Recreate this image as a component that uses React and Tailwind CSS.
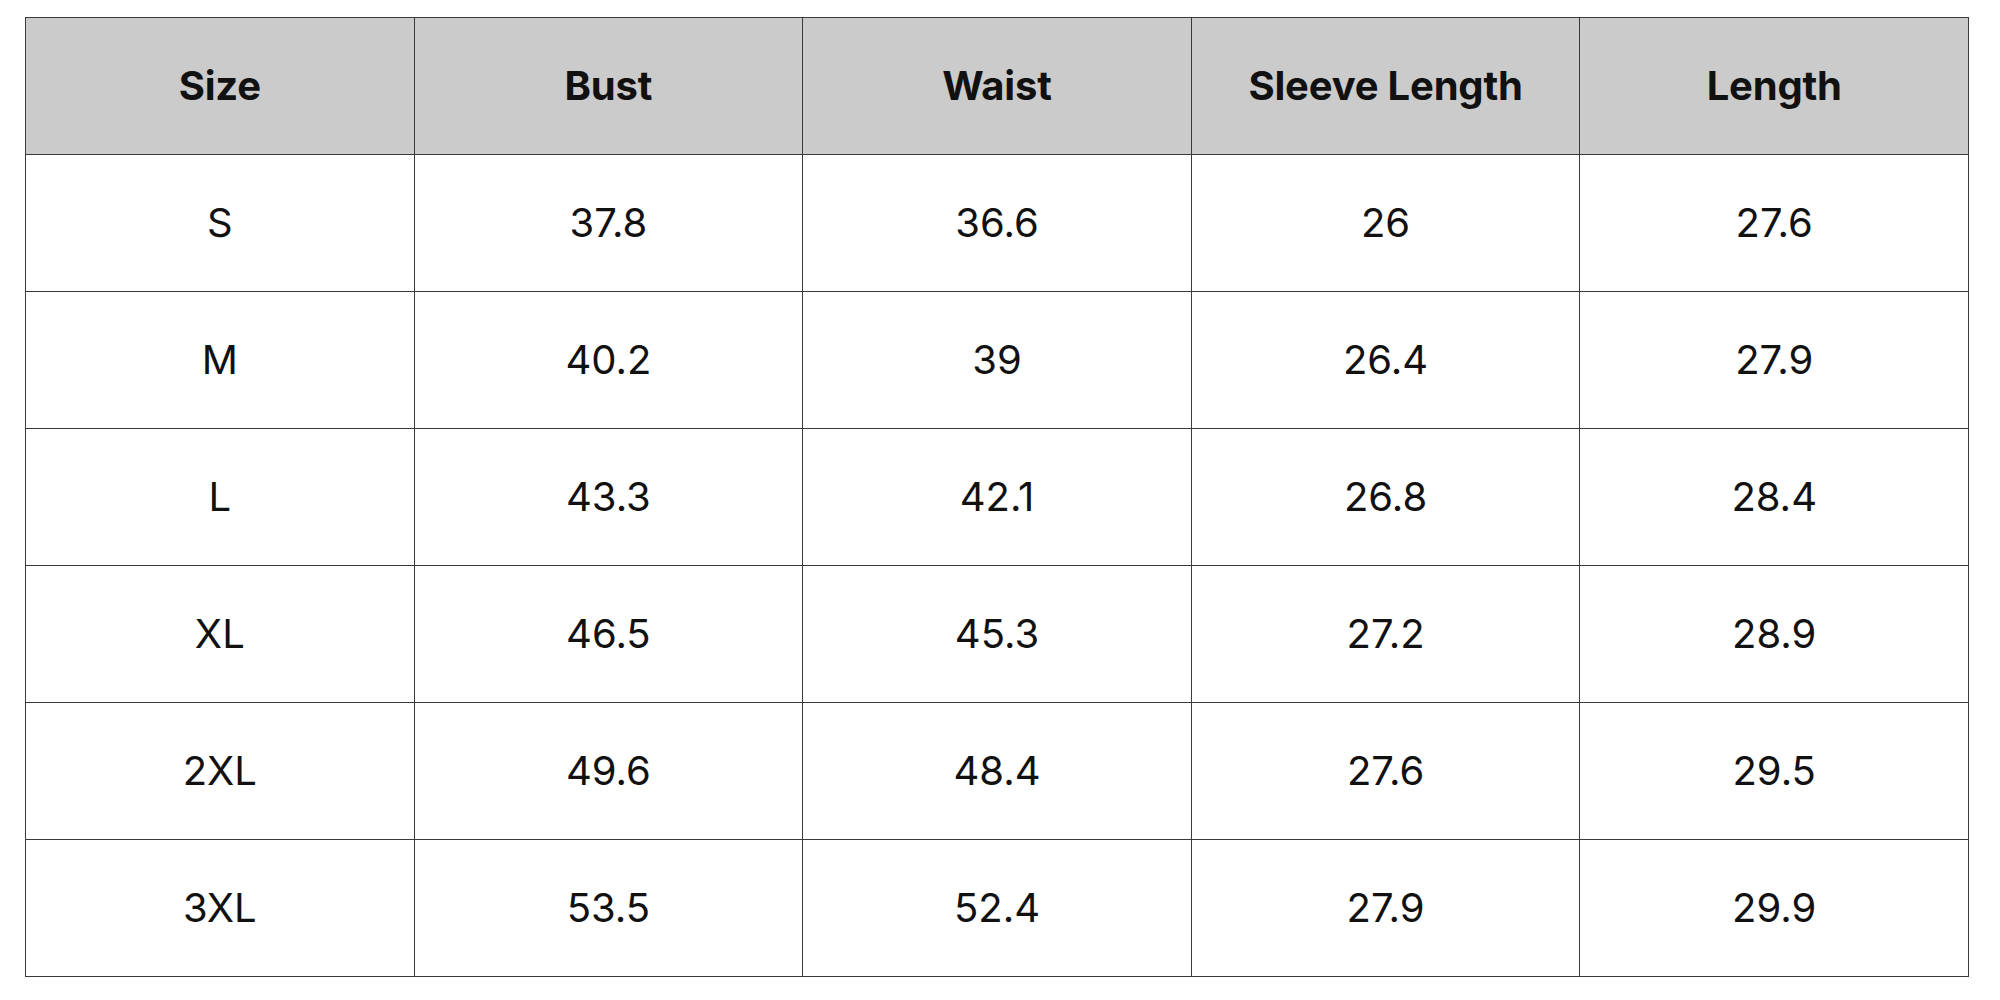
const headers = ["Size", "Bust", "Waist", "Sleeve Length", "Length"];

const rows = [
  ["S", "37.8", "36.6", "26", "27.6"],
  ["M", "40.2", "39", "26.4", "27.9"],
  ["L", "43.3", "42.1", "26.8", "28.4"],
  ["XL", "46.5", "45.3", "27.2", "28.9"],
  ["2XL", "49.6", "48.4", "27.6", "29.5"],
  ["3XL", "53.5", "52.4", "27.9", "29.9"],
];

export default function App() {
  return (
    <div className="min-h-screen bg-white pl-[25px] pt-[17px] font-['Inter',sans-serif] text-[#111]">
      <table className="w-[1944px] table-fixed border-collapse border border-[#4a4a4a]">
        <thead>
          <tr className="h-[137px] bg-[#cbcbcb]">
            {headers.map((h) => (
              <th
                key={h}
                className="border border-[#3a3a3a] text-center align-middle text-[40px] font-bold tracking-[-0.2px]"
              >
                {h}
              </th>
            ))}
          </tr>
        </thead>
        <tbody>
          {rows.map((row) => (
            <tr key={row[0]} className="h-[137px]">
              {row.map((cell, i) => (
                <td
                  key={i}
                  className="border border-[#3a3a3a] text-center align-middle text-[40px] font-normal"
                >
                  {cell}
                </td>
              ))}
            </tr>
          ))}
        </tbody>
      </table>
    </div>
  );
}
